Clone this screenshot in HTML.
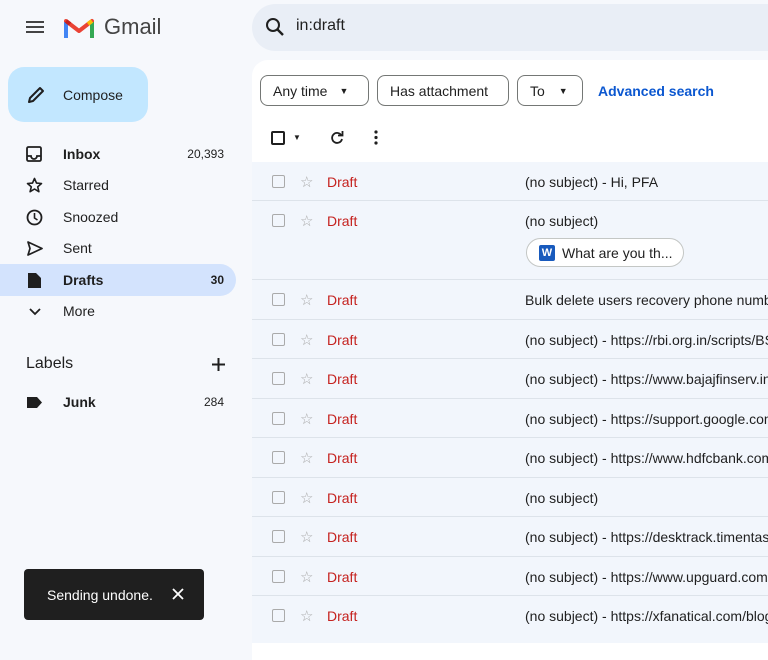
<!DOCTYPE html><html><head><meta charset="utf-8"><style>
*{box-sizing:border-box;margin:0;padding:0}
body{width:768px;height:643px;overflow:hidden;background:#f6f8fc;font-family:"Liberation Sans",Arial,sans-serif;color:#1f1f1f;position:relative}
.abs{position:absolute}
.nav{position:absolute;left:0;width:236px;height:32px;display:flex;align-items:center;font-size:14px}
.nav .ic{position:absolute;left:26px;top:8px}
.nav .lb{position:absolute;left:63px}
.nav .ct{position:absolute;right:12px;font-size:12px}
.main{position:absolute;left:252px;top:60px;width:540px;height:600px;background:#fff;border-radius:16px 0 0 0}
.chip{position:absolute;top:75px;height:31px;border:1px solid #747775;border-radius:8px;font-size:14px;display:flex;align-items:center;padding:0 12px;color:#1f1f1f;background:#fff}
.row{position:absolute;left:252px;width:520px;background:#f2f6fc;border-bottom:1px solid #dde3ea;font-size:14px}
.row .cb{position:absolute;left:20px;width:13px;height:13px;border:1.5px solid #aaa;border-radius:2px}
.row .st{position:absolute;left:48px;color:#aaa;font-size:15px}
.row .dr{position:absolute;left:75px;color:#c5221f}
.row .sb{position:absolute;left:273px;white-space:nowrap;color:#1f1f1f}
</style></head><body>
<svg class="abs" style="left:25px;top:19px" width="20" height="16"><path d="M1 3h18M1 8h18M1 13h18" stroke="#444" stroke-width="2"/></svg>
<svg class="abs" style="left:64px;top:16px" width="30" height="23" viewBox="0 0 30 23"><path d="M2 22V5l13 10L28 5v17" fill="none" stroke="#ea4335" stroke-width="4" stroke-linejoin="round"/><path d="M2 22V6" stroke="#4285f4" stroke-width="4"/><path d="M28 22V6" stroke="#34a853" stroke-width="4"/><path d="M28 5l-4 3" stroke="#fbbc04" stroke-width="4"/><path d="M2 5l4 3" stroke="#c5221f" stroke-width="4"/></svg>
<div class="abs" style="left:104px;top:14px;font-size:22px;color:#444">Gmail</div>
<div class="abs" style="left:252px;top:4px;width:540px;height:47px;background:#e9eef6;border-radius:24px"></div>
<svg class="abs" style="left:265px;top:17px" width="20" height="20"><circle cx="8" cy="8" r="6" fill="none" stroke="#1f1f1f" stroke-width="2"/><path d="M12.5 12.5L18 18" stroke="#1f1f1f" stroke-width="2.4"/></svg>
<div class="abs" style="left:296px;top:17px;font-size:16px">in:draft</div>
<div class="abs" style="left:8px;top:67px;width:140px;height:55px;background:#c2e7ff;border-radius:16px"></div>
<svg class="abs" style="left:26px;top:85px" width="20" height="20"><path d="M3 17l1-4L14 3l3 3L7 16z" fill="none" stroke="#1f1f1f" stroke-width="2" stroke-linejoin="round"/></svg>
<div class="abs" style="left:63px;top:87px;font-size:14px">Compose</div>
<div class="nav" style="top:138px"><svg class="ic" width="17" height="17"><rect x="1" y="1" width="14" height="14" rx="1.5" fill="none" stroke="#1f1f1f" stroke-width="1.8"/><path d="M1 10h4a3 3 0 006 0h4" fill="none" stroke="#1f1f1f" stroke-width="1.8"/></svg><span class="lb" style="font-weight:bold">Inbox</span><span class="ct">20,393</span></div>
<div class="nav" style="top:169px"><svg class="ic" width="17" height="17"><path d="M8.5 1.5l2 4.6 5 .4-3.8 3.3 1.2 4.9-4.4-2.7-4.4 2.7 1.2-4.9L1.5 6.5l5-.4z" fill="none" stroke="#1f1f1f" stroke-width="1.6" stroke-linejoin="round"/></svg><span class="lb">Starred</span></div>
<div class="nav" style="top:201px"><svg class="ic" width="17" height="17"><circle cx="8.5" cy="8.5" r="7" fill="none" stroke="#1f1f1f" stroke-width="1.8"/><path d="M8.5 4v5l3 2" fill="none" stroke="#1f1f1f" stroke-width="1.6"/></svg><span class="lb">Snoozed</span></div>
<div class="nav" style="top:232px"><svg class="ic" width="17" height="17"><path d="M2 2l14 6.5L2 15l2-6.5z" fill="none" stroke="#1f1f1f" stroke-width="1.7" stroke-linejoin="round"/></svg><span class="lb">Sent</span></div>
<div class="nav" style="top:264px;background:#d3e3fd;border-radius:0 16px 16px 0"><svg class="ic" width="17" height="17"><path d="M2 1h8l5 5v10H2z" fill="#1f1f1f"/></svg><span class="lb" style="font-weight:bold">Drafts</span><span class="ct" style="font-weight:bold">30</span></div>
<div class="nav" style="top:295px"><svg class="ic" width="17" height="17" style="top:10px"><path d="M4 4l5 5 5-5" fill="none" stroke="#1f1f1f" stroke-width="1.8"/></svg><span class="lb">More</span></div>
<div class="abs" style="left:26px;top:355px;font-size:16px">Labels</div>
<svg class="abs" style="left:211px;top:357px" width="15" height="15"><path d="M7.5 1v13M1 7.5h13" stroke="#1f1f1f" stroke-width="2"/></svg>
<div class="nav" style="top:386px"><svg class="ic" width="17" height="17" style="top:10px"><path d="M1 1h10l5 5.5-5 5.5H1z" fill="#1f1f1f"/></svg><span class="lb" style="font-weight:bold">Junk</span><span class="ct">284</span></div>
<div class="abs" style="left:24px;top:569px;width:180px;height:51px;background:#1f1f1f;border-radius:4px;color:#fff;font-size:14px;padding:18px 0 0 23px">Sending undone.<svg style="position:absolute;left:148px;top:19px" width="12" height="12"><path d="M1 1l10 10M11 1L1 11" stroke="#fff" stroke-width="1.8"/></svg></div>
<div class="main"></div>
<div class="chip" style="left:260px;width:109px">Any time <span style="margin-left:12px;font-size:9px">▼</span></div>
<div class="chip" style="left:377px;width:132px">Has attachment</div>
<div class="chip" style="left:517px;width:66px">To <span style="margin-left:14px;font-size:9px">▼</span></div>
<div class="abs" style="left:598px;top:83px;font-size:14px;color:#0b57d0;font-weight:bold">Advanced search</div>
<div class="abs" style="left:271px;top:131px;width:14px;height:14px;border:2px solid #1f1f1f;border-radius:2px"></div>
<div class="abs" style="left:293px;top:133px;font-size:8px">▼</div>
<svg class="abs" style="left:330px;top:131px" width="14" height="14"><path d="M11.5 4.5A5 5 0 1 0 12 8" fill="none" stroke="#1f1f1f" stroke-width="1.8"/><path d="M8 4.5h4.5V0" fill="none" stroke="#1f1f1f" stroke-width="1.8"/></svg>
<svg class="abs" style="left:374px;top:130px" width="4" height="15"><circle cx="2" cy="2" r="1.6" fill="#1f1f1f"/><circle cx="2" cy="7.5" r="1.6" fill="#1f1f1f"/><circle cx="2" cy="13" r="1.6" fill="#1f1f1f"/></svg>
<div class="row" style="top:162px;height:39px"><span class="cb" style="top:13px"></span><span class="st" style="top:11px">☆</span><span class="dr" style="top:12px">Draft</span><span class="sb" style="top:12px">(no subject) - Hi, PFA</span></div>
<div class="row" style="top:201px;height:79px"><span class="cb" style="top:13px"></span><span class="st" style="top:11px">☆</span><span class="dr" style="top:12px">Draft</span><span class="sb" style="top:12px">(no subject)</span>
<div style="position:absolute;left:274px;top:37px;width:158px;height:29px;border:1px solid #c4c7c5;border-radius:15px;background:#fff;font-size:14px;padding:6px 0 0 35px">What are you th...<span style="position:absolute;left:12px;top:6px;width:16px;height:16px;background:#185abd;color:#fff;font-size:11px;font-weight:bold;text-align:center;line-height:16px;border-radius:2px">W</span></div></div>
<div class="row" style="top:280px;height:40px"><span class="cb" style="top:13px"></span><span class="st" style="top:11px">☆</span><span class="dr" style="top:12px">Draft</span><span class="sb" style="top:12px">Bulk delete users recovery phone numbers</span></div>
<div class="row" style="top:320px;height:39px"><span class="cb" style="top:13px"></span><span class="st" style="top:11px">☆</span><span class="dr" style="top:12px">Draft</span><span class="sb" style="top:12px">(no subject) - https://rbi.org.in/scripts/BS</span></div>
<div class="row" style="top:359px;height:40px"><span class="cb" style="top:13px"></span><span class="st" style="top:11px">☆</span><span class="dr" style="top:12px">Draft</span><span class="sb" style="top:12px">(no subject) - https://www.bajajfinserv.in</span></div>
<div class="row" style="top:399px;height:39px"><span class="cb" style="top:13px"></span><span class="st" style="top:11px">☆</span><span class="dr" style="top:12px">Draft</span><span class="sb" style="top:12px">(no subject) - https://support.google.com</span></div>
<div class="row" style="top:438px;height:40px"><span class="cb" style="top:13px"></span><span class="st" style="top:11px">☆</span><span class="dr" style="top:12px">Draft</span><span class="sb" style="top:12px">(no subject) - https://www.hdfcbank.com</span></div>
<div class="row" style="top:478px;height:39px"><span class="cb" style="top:13px"></span><span class="st" style="top:11px">☆</span><span class="dr" style="top:12px">Draft</span><span class="sb" style="top:12px">(no subject)</span></div>
<div class="row" style="top:517px;height:40px"><span class="cb" style="top:13px"></span><span class="st" style="top:11px">☆</span><span class="dr" style="top:12px">Draft</span><span class="sb" style="top:12px">(no subject) - https://desktrack.timentask</span></div>
<div class="row" style="top:557px;height:39px"><span class="cb" style="top:13px"></span><span class="st" style="top:11px">☆</span><span class="dr" style="top:12px">Draft</span><span class="sb" style="top:12px">(no subject) - https://www.upguard.com</span></div>
<div class="row" style="top:596px;height:47px;border-bottom:none"><span class="cb" style="top:13px"></span><span class="st" style="top:11px">☆</span><span class="dr" style="top:12px">Draft</span><span class="sb" style="top:12px">(no subject) - https://xfanatical.com/blog</span></div>
</body></html>
